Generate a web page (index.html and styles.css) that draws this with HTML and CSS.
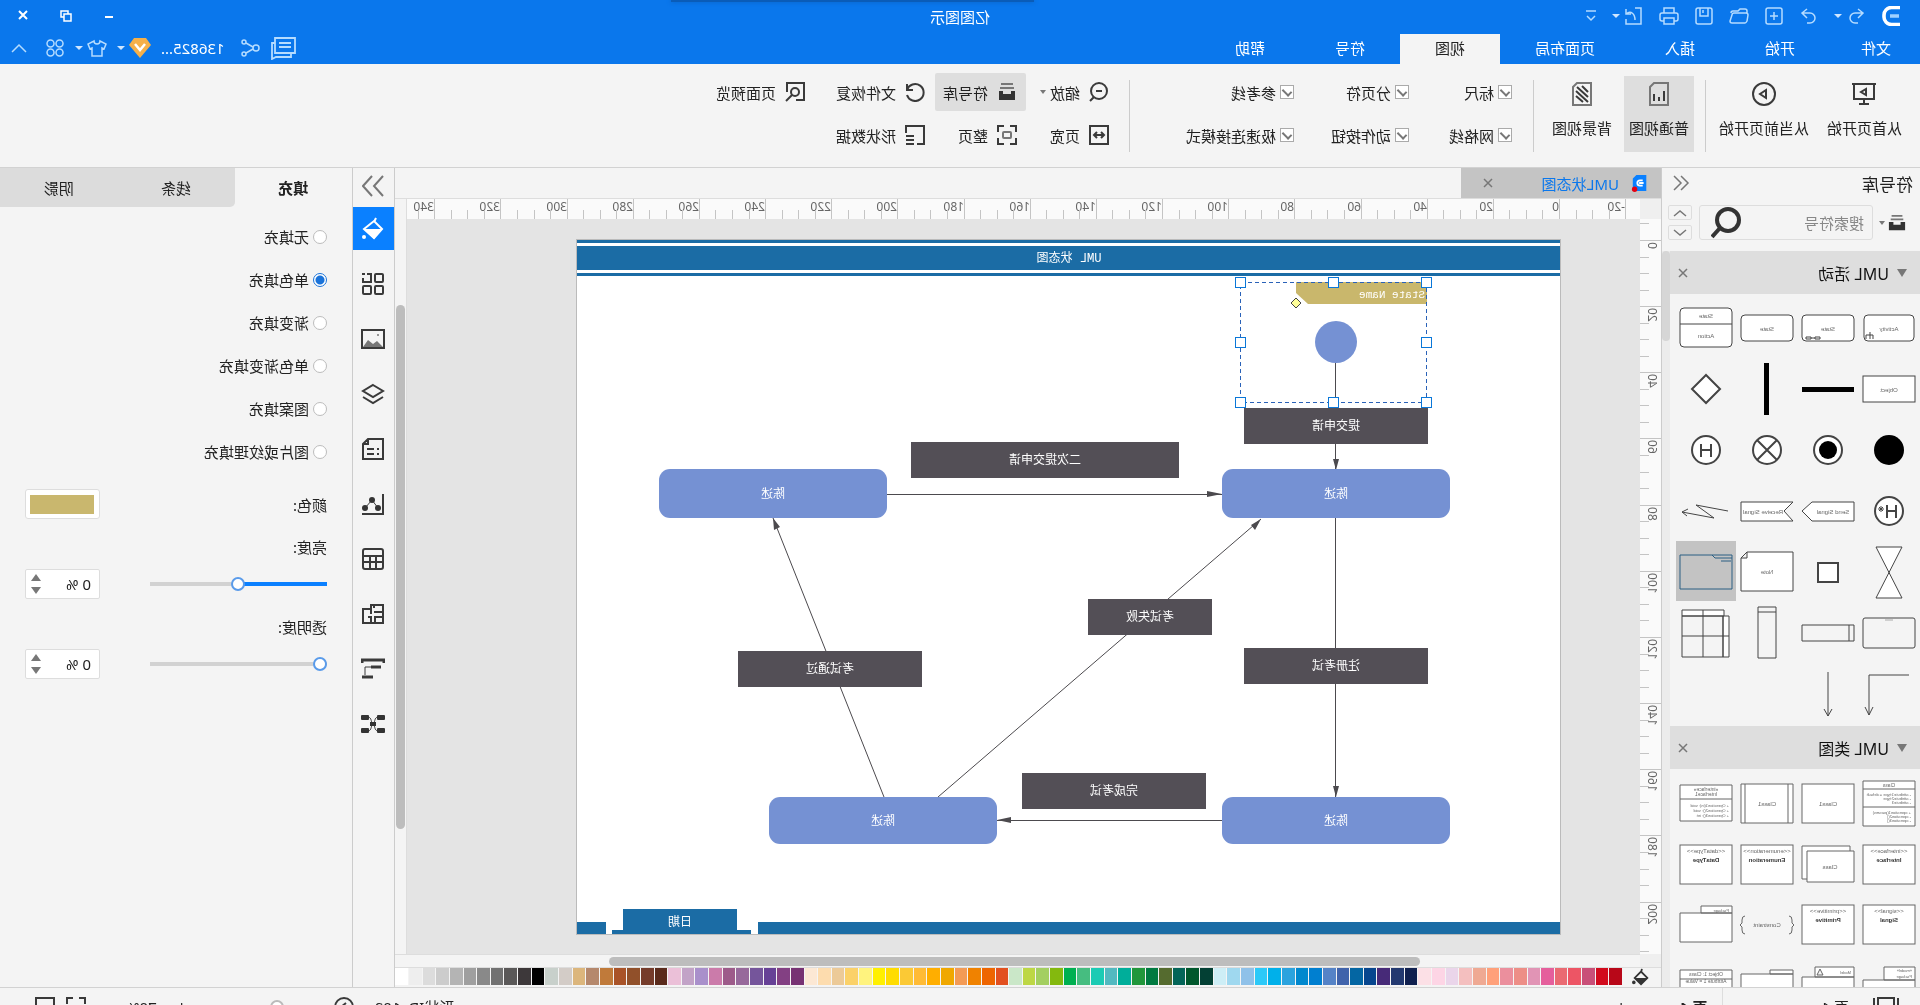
FILE: index.html
```html
<!DOCTYPE html>
<html lang="zh-CN">
<head>
<meta charset="utf-8">
<title>亿图图示</title>
<link rel="stylesheet" href="styles.css">
</head>
<body>
<div class="app">
  <header class="titlebar">
    <div class="quick">
      <svg class="i20" viewBox="0 0 20 20"><path d="M17 1.500H8.500A7.500 7.500 0 0 0 1 9.500v1A7.500 7.500 0 0 0 8.500 18.500H17" transform="translate(18 0) scale(-1 1)" fill="none" stroke="#fff" stroke-width="3.600"/><path d="M2 10h9" stroke="#9fd0ff" stroke-width="3.500"/></svg>
      <span class="pair"><button><svg class="i20 ln" viewBox="0 0 20 20"><path d="M8 3 3 7l5 5M3 7h8a5 5 0 0 1 0 10H8"/></svg></button><i class="caret"></i></span>
      <button><svg class="i20 ln" viewBox="0 0 20 20"><path d="m12 3 5 4-5 5M17 7H9a5 5 0 0 0 0 10h3"/></svg></button>
      <button><svg class="i20 ln" viewBox="0 0 20 20"><rect x="2" y="2" width="16" height="16" rx="2"/><path d="M10 6v8M6 10h8"/></svg></button>
      <button><svg class="i20 ln" viewBox="0 0 20 20"><path d="M2 7V5q0-2 2-2h5l2 2h5q2 0 2 2M1 9q0-2 2-2h12q2 0 2 2l2 6q0 2-2 2H4q-1 0-2-2z"/></svg></button>
      <button><svg class="i20 ln" viewBox="0 0 20 20"><rect x="2" y="2" width="16" height="16" rx="2"/><path d="M6 2v8h8V2M11 4v3"/></svg></button>
      <button><svg class="i20 ln" viewBox="0 0 20 20"><path d="M5 7V2h10v5M5 15H3q-2 0-2-2V9q0-2 2-2h14q2 0 2 2v4q0 2-2 2h-2M5 12h10v6H5z"/></svg></button>
      <span class="pair"><button><svg class="i20 ln" viewBox="0 0 20 20"><path d="M9 2H3v16h15v-5M18 3v5h-5M18 8c-5-4-9 0-9 6"/></svg></button><i class="caret"></i></span>
      <button><svg class="i12 ln" viewBox="0 0 12 12"><path d="M1 1h10M2 6l4 4 4-4"/></svg></button>
    </div>
    <h1>亿图图示</h1>
    <div class="win">
      <button><svg class="i20 wh" viewBox="0 0 20 20"><path d="M6 11h8"/></svg></button>
      <button><svg class="i20 wh thin" viewBox="0 0 20 20"><path d="M5 8h7v7H5zM8 8V5h7v6h-3"/></svg></button>
      <button><svg class="i20 wh" viewBox="0 0 20 20"><path d="m6 5 8 8M14 5l-8 8"/></svg></button>
    </div>
    <div class="drop-shadow"></div>
  </header>

  <div class="menubar">
    <nav>
      <a href="#" class="first">文件</a><a href="#">开始</a><a href="#">插入</a><a href="#">页面布局</a><a href="#" class="on">视图</a><a href="#">符号</a><a href="#">帮助</a>
    </nav>
    <div class="account">
      <button><svg class="i26 ln" viewBox="0 0 26 24"><path d="M1 2h20v15H1zM5 7h12M5 11h12M5 17v4h15l4 2V7h-3" stroke-width="1.800"/></svg></button>
      <button><svg class="i20 ln" viewBox="0 0 20 20"><circle cx="4" cy="10" r="3"/><circle cx="16" cy="4" r="2"/><circle cx="16" cy="16" r="2"/><path d="m7 9 7-4M7 11l7 4"/></svg></button>
      <span class="user">136825...</span>
      <span class="pair"><svg class="i22" viewBox="0 0 22 20"><path d="M5 0h12l5 7-11 13L0 7z" fill="#f5b04a"/><path d="m6 6 5 6 5-6" fill="none" stroke="#fff" stroke-width="2.500"/></svg><i class="caret"></i></span>
      <span class="pair"><button><svg class="i20 ln" viewBox="0 0 20 20"><path d="M7 3 1 6l2 5 2-1v8h10v-8l2 1 2-5-6-3a3 3 0 0 1-6 0z"/></svg></button><i class="caret"></i></span>
      <button><svg class="i20 ln" viewBox="0 0 20 20"><circle cx="5.500" cy="5.500" r="3.500"/><circle cx="14.500" cy="5.500" r="3.500"/><circle cx="5.500" cy="14.500" r="3.500"/><circle cx="14.500" cy="14.500" r="3.500"/></svg></button>
      <button class="fold"><svg class="i16 ln" viewBox="0 0 16 16"><path d="m1 12 7-7 7 7"/></svg></button>
    </div>
  </div>

  <div class="ribbon">
    <button class="big"><svg class="i24 dk" viewBox="0 0 24 24"><path d="M0 2h24M2 2v15h20V2M12 17v5M7 22h10M10 7v6l5-3z"/></svg>从首页开始</button>
    <button class="big"><svg class="i24 dk" viewBox="0 0 24 24"><circle cx="12" cy="12" r="11"/><path d="M10 8v8l6-4z"/></svg>从当前页开始</button>
    <span class="sep"></span>
    <button class="big on"><svg class="i24 dk" viewBox="0 0 24 24"><path d="M3 1h14l4 4v18H3z" stroke="#777"/><path d="M7 12v7M12 15v4M17 9v10" transform="translate(24 0) scale(-1 1)"/></svg>普通视图</button>
    <button class="big last"><svg class="i24 dk" viewBox="0 0 24 24"><path d="M3 1h14l4 4v18H3z" stroke="#777"/><path d="M6 10l6-6M6 15 17 5M6 20 18 9M11 20l7-6"/></svg>背景视图</button>
    <span class="sep"></span>
    <div class="checks">
      <label><input type="checkbox" checked>标尺</label><label><input type="checkbox" checked>分页符</label><label><input type="checkbox" checked>参考线</label>
      <label><input type="checkbox" checked>网格线</label><label><input type="checkbox" checked>动作按钮</label><label><input type="checkbox" checked>极速连接模式</label>
    </div>
    <span class="sep"></span>
    <div class="tools">
      <button><svg class="i20 dk" viewBox="0 0 20 20"><circle cx="10" cy="9" r="8"/><path d="m15 15 4 4M7 9h6"/></svg>缩放<i class="caret grey"></i></button>
      <button class="on"><svg class="i20" viewBox="0 0 20 20"><path d="M4 2h12M3 6h14" stroke="#777" stroke-width="2"/><path d="M2 9h4v3h8V9h4v9H2z" fill="#333"/></svg>符号库</button>
      <button><svg class="i20 dk" viewBox="0 0 20 20"><path d="M18 2v6h-6M18 8a8.500 8.500 0 1 0 0 5"/></svg>文件恢复</button>
      <button><svg class="i20 dk" viewBox="0 0 20 20"><path d="M9 18H1V1h17v9"/><circle cx="10" cy="10" r="4"/><path d="m13 13 6 6"/></svg>页面预览</button>
      <button><svg class="i20 dk" viewBox="0 0 20 20"><path d="M1 1h18v18H1zM5 10h10M8 7l-3 3 3 3M12 7l3 3-3 3"/></svg>页宽</button>
      <button><svg class="i20 dk" viewBox="0 0 20 20"><path d="M1 7V1h6M13 1h6v6M19 13v6h-6M7 19H1v-6"/><rect x="6" y="7" width="8" height="6" rx="1" stroke="#777"/></svg>整页</button>
      <button><svg class="i20 dk" viewBox="0 0 20 20"><path d="M8 19H1V1h18v7M11 11h8M11 15h8M11 19h8"/></svg>形状数据</button>
    </div>
  </div>

  <main class="work">
    <aside class="library">
      <div class="lib-head"><h2>符号库</h2><button><svg class="i18 gy" viewBox="0 0 18 18"><path d="m9 2-7 7 7 7M16 2 9 9l7 7"/></svg></button></div>
      <div class="lib-search">
        <button class="lib-menu"><svg class="i18" viewBox="0 0 20 20"><path d="M4 2h12M3 6h14" stroke="#777" stroke-width="2"/><path d="M1 9h5v3h8V9h5v9H1z" fill="#333"/></svg><i class="caret grey"></i></button>
        <div class="field"><input type="text" placeholder="搜索符号" aria-label="搜索符号"><svg class="i30" viewBox="0 0 30 32"><circle cx="13" cy="13" r="11"/><path d="m21 21 8 9"/></svg></div>
        <div class="updown"><button><svg class="i14 gy" viewBox="0 0 14 8"><path d="m1 7 6-5 6 5"/></svg></button><button><svg class="i14 gy" viewBox="0 0 14 8"><path d="m1 1 6 5 6-5"/></svg></button></div>
      </div>
      <div class="lib-body">
        <div class="lists">
          <div class="group"><i class="tri"></i><h3>UML 活动</h3><button><svg class="i10 gy" viewBox="0 0 10 10"><path d="m1 1 8 8M9 1 1 9"/></svg></button></div>
          <div class="shapes">
            <svg viewBox="0 0 60 60"><rect x="5" y="18" width="50" height="26" rx="4"/><text x="30" y="34">Activity</text><path d="M46 42v-4h7v4M49 35v7"/></svg>
            <svg viewBox="0 0 60 60"><rect x="4" y="18" width="52" height="26" rx="4"/><text x="30" y="34">State</text><path class="n" d="M38 40h5v2h-5zM47 40h5v2h-5zM43 41h4"/></svg>
            <svg viewBox="0 0 60 60"><rect x="4" y="18" width="52" height="26" rx="4"/><text x="30" y="34">State</text></svg>
            <svg viewBox="0 0 60 60"><rect x="4" y="11" width="52" height="39" rx="4"/><path d="M4 27h52"/><text x="30" y="21">State</text><text x="30" y="41">Action</text></svg>

            <svg viewBox="0 0 60 60"><rect x="4" y="18" width="52" height="26"/><text x="30" y="34">Object</text></svg>
            <svg viewBox="0 0 60 60"><rect class="f" x="4" y="29" width="52" height="5"/></svg>
            <svg viewBox="0 0 60 60"><rect class="f" x="28" y="5" width="5" height="52"/></svg>
            <svg viewBox="0 0 60 60"><path class="b" d="M30 17 44 31 30 45 16 31z"/></svg>

            <svg viewBox="0 0 60 60"><circle class="f" cx="30" cy="31" r="15"/></svg>
            <svg viewBox="0 0 60 60"><circle class="b" cx="30" cy="31" r="14"/><circle class="f" cx="30" cy="31" r="9"/></svg>
            <svg viewBox="0 0 60 60"><circle class="b" cx="30" cy="31" r="14"/><path class="b" d="m20 21 20 20M40 21 20 41"/></svg>
            <svg viewBox="0 0 60 60"><circle class="b" cx="30" cy="31" r="14"/><path class="b" d="M25 25v13M35 25v13M25 31h10"/></svg>

            <svg viewBox="0 0 60 60"><circle class="b" cx="30" cy="31" r="14"/><path class="b" d="M23 25v13M32 25v13M23 31h9"/><path d="M38 26v6M35 29h6M36 27l4 4M40 27l-4 4"/></svg>
            <svg viewBox="0 0 60 60"><path d="M4 22h42l10 9-10 10H4z"/><text x="25" y="34">Send Signal</text></svg>
            <svg viewBox="0 0 60 60"><path d="M4 22h52v19H4l9-10z"/><text x="34" y="34">Receive Signal</text></svg>
            <svg viewBox="0 0 60 60"><path class="n" d="m8 31 32-6-18 13 32-6M48 29l6 3-5 4"/></svg>

            <svg viewBox="0 0 60 60"><path d="M17 6h26L17 57h26z"/></svg>
            <svg viewBox="0 0 60 60"><rect x="20" y="22" width="20" height="19" stroke-width="2"/></svg>
            <svg viewBox="0 0 60 60"><path d="M4 11h46l6 6v33H4zM50 11v6h6"/><text x="30" y="33">Note</text></svg>
            <svg class="sel" viewBox="0 0 60 60"><path class="n" d="M4 14h52v34H4zM4 17h17l3-3"/><path d="M5 20h10" /></svg>

            <svg viewBox="0 0 60 60"><rect class="n" x="4" y="16" width="52" height="30" rx="2"/><path d="M26 18h8" stroke="#aaa"/></svg>
            <svg viewBox="0 0 60 60"><path class="n" d="M4 23h52v16H4zM9 23v16"/></svg>
            <svg viewBox="0 0 60 60"><path class="n" d="M21 5h18v51H21zM21 10h18"/></svg>
            <svg viewBox="0 0 60 60"><path d="M12 8h42v6H12zM7 14h6v41H7z"/><path class="n" d="M13 14h41v41H13zM33 8v47M7 34h47"/></svg>

            <svg viewBox="0 0 60 60"><path class="n" d="M10 12h40v40M46 44l4 8 4-8"/></svg>
            <svg viewBox="0 0 60 60"><path class="n" d="M30 9v44M26 46l4 7 4-7"/></svg>
          </div>
          <div class="group"><i class="tri"></i><h3>UML 类图</h3><button><svg class="i10 gy" viewBox="0 0 10 10"><path d="m1 1 8 8M9 1 1 9"/></svg></button></div>
          <div class="shapes cls">
            <svg viewBox="0 0 60 60"><path d="M4 9h52v45H4zM4 17h52M4 35h52"/><text class="s" x="30" y="15">Class</text><text class="l" x="8" y="24">- attribute1:type = default</text><text class="l" x="8" y="28">- attribute2:type</text><text class="l" x="8" y="32">- attribute3</text><text class="l" x="8" y="42">+ operation1(params)</text><text class="l" x="8" y="46">- operation2()</text><text class="l" x="8" y="50">- operation3()</text></svg>
            <svg viewBox="0 0 60 60"><rect x="4" y="12" width="52" height="39"/><text x="30" y="34">Class1</text></svg>
            <svg viewBox="0 0 60 60"><path d="M4 12h52v39H4zM9 12v39M52 12v39"/><text x="30" y="34">Class1</text></svg>
            <svg viewBox="0 0 60 60"><path d="M4 13h52v36H4zM4 27h52"/><text class="s" x="30" y="19">«interface»</text><text class="s" x="30" y="24">Interface1</text><text class="l" x="7" y="35">+ Operation1(in): void</text><text class="l" x="7" y="40">+ Operation2(): void</text><text class="l" x="7" y="45">+ Operation3(): int</text></svg>

            <svg viewBox="0 0 60 60"><rect x="4" y="12" width="52" height="39"/><text x="30" y="20">&lt;&lt;interface&gt;&gt;</text><text class="bd" x="30" y="29">Interface</text></svg>
            <svg viewBox="0 0 60 60"><path d="M8 13h48v33H8z"/><path d="M4 18h47v31H4z"/><text x="28" y="36">Class</text></svg>
            <svg viewBox="0 0 60 60"><rect x="4" y="12" width="52" height="39"/><text x="30" y="20">&lt;&lt;enumeration&gt;&gt;</text><text class="bd" x="30" y="29">Enumeration</text></svg>
            <svg viewBox="0 0 60 60"><rect x="4" y="12" width="52" height="39"/><text x="30" y="20">&lt;&lt;dataType&gt;&gt;</text><text class="bd" x="30" y="29">DataType</text></svg>

            <svg viewBox="0 0 60 60"><rect x="4" y="11" width="52" height="39"/><text x="30" y="19">&lt;&lt;signal&gt;&gt;</text><text class="bd" x="30" y="28">Signal</text></svg>
            <svg viewBox="0 0 60 60"><rect x="4" y="11" width="52" height="39"/><text x="30" y="19">&lt;&lt;primitive&gt;&gt;</text><text class="bd" x="30" y="28">Primitive</text></svg>
            <svg viewBox="0 0 60 60"><path class="n" d="M8 22q-3 0-3 4v3l-2 2 2 2v3q0 4 3 4M52 22q3 0 3 4v3l2 2-2 2v3q0 4-3 4"/><text x="30" y="33">Constraint</text></svg>
            <svg viewBox="0 0 60 60"><path d="M4 12h31v7H4zM4 19h52v29H4z"/><text class="l" x="7" y="18">Package</text></svg>

            <svg viewBox="0 0 60 60"><path d="M4 12h31v13H4zM4 25h52v30H4z"/><text class="l" x="7" y="17">«model»</text><text class="l" x="7" y="23">Package</text></svg>
            <svg viewBox="0 0 60 60"><path d="M4 12h39v10H4zM4 22h52v30H4zM35 20h6l-3-6z"/><text class="l" x="7" y="19">Model</text></svg>
            <svg viewBox="0 0 60 60"><path d="M4 15h23v4H4zM4 19h52v30H4z"/></svg>
            <svg viewBox="0 0 60 60"><path d="M4 15h52v40H4zM4 24h52"/><text class="s" x="30" y="21">Object 1: Class</text><text class="s" x="30" y="28">Attribute 1 = Value</text></svg>
          </div>
        </div>
        <div class="lib-scroll"><i></i></div>
      </div>
    </aside>

    <section class="center">
      <div class="doctabs">
        <div class="doctab"><svg class="i18" viewBox="0 0 18 20"><path d="M2 1h11l4 4v14H2z" fill="#0a80ff"/><path d="M6 7h3a3 3 0 0 1 0 6H6M5 10h5" fill="none" stroke="#fff" stroke-width="2"/><circle cx="15" cy="17" r="3" fill="#e60012"/></svg><span>UML状态图</span><button><svg class="i10 gy" viewBox="0 0 10 10"><path d="m1 1 8 8M9 1 1 9"/></svg></button></div>
      </div>
      <div class="board">
        <div class="corner"></div>
        <svg class="rule-h" id="rule-h"></svg>
        <div class="vscroll"><i></i></div>
        <svg class="rule-v" id="rule-v"></svg>
        <div class="canvas">
          <svg class="sheet" viewBox="0 0 983 694">
            <g fill="#1b6ca5">
              <path d="M0 0h983v3H0zM0 6h983v24H0zM0 33h983v3H0z"/>
              <path d="M0 682h802v12H0zM809 690h139v4H809zM823 669h114v25H823zM954 682h29v12h-29z"/>
            </g>
            <text x="491" y="22">UML 状态图</text>
            <text x="880" y="686">日期</text>
            <g class="wire">
              <path class="crisp" d="M224 123v106M224 278v279M673 254H338M338 580h225"/>
              <path d="M622 557 299 279M676 557 787 278"/>
            </g>
            <g fill="#4c4a4e">
              <path d="m224 230-3-11h6zM224 557l-3-11h6zM338 254l15-3v6zM563 580l-14-3v6zM299 279l10 6-4 5zM787 278l-7 9 6 3z"/>
            </g>
            <circle cx="224" cy="102" r="21" fill="#7591d3"/>
            <g fill="#534f56">
              <path d="M132 168h184v36H132zM381 202h268v36H381zM348 359h124v36H348zM132 408h184v36H132zM638 411h184v36H638zM354 533h184v36H354z"/>
            </g>
            <g fill="#7591d3">
              <rect x="110" y="229" width="228" height="49" rx="11"/><rect x="673" y="229" width="228" height="49" rx="11"/>
              <rect x="110" y="557" width="228" height="47" rx="11"/><rect x="563" y="557" width="228" height="47" rx="11"/>
            </g>
            <text x="224" y="190">提交申请</text><text x="515" y="224">二次提交申请</text><text x="410" y="381">考试失败</text><text x="224" y="430">注册考试</text><text x="730" y="433">考试通过</text><text x="446" y="555">完成考试</text>
            <text x="224" y="258">陈述</text><text x="787" y="258">陈述</text><text x="224" y="585">陈述</text><text x="677" y="585">陈述</text>
            <path d="M133 42h131v11l-12 11H133z" fill="#c9b76c"/>
            <text class="mono" x="135" y="58">State Name</text>
            <rect class="pick" x="133" y="42" width="186" height="120"/>
            <g class="grips">
              <rect x="128" y="37" width="10" height="10"/><rect x="221" y="37" width="10" height="10"/><rect x="314" y="37" width="10" height="10"/>
              <rect x="128" y="97" width="10" height="10"/><rect x="314" y="97" width="10" height="10"/>
              <rect x="128" y="157" width="10" height="10"/><rect x="221" y="157" width="10" height="10"/><rect x="314" y="157" width="10" height="10"/>
            </g>
            <path d="m264 58 5 5-5 5-5-5z" fill="#ffff99" stroke="#444"/>
          </svg>
        </div>
        <div class="corner"></div>
        <div class="hscroll"><i></i></div>
      </div>
      <div class="palette"><button><svg class="i18" viewBox="0 0 20 20"><path d="m9 1 1 4M3 11l7-7 7 7-7 7z" fill="none" stroke="#333" stroke-width="2"/><path d="M3 11h14l-7 7z" fill="#333"/><circle cx="18" cy="16" r="2" fill="#333"/></svg></button><div id="swatches"></div></div>
    </section>

    <div class="strip">
      <button class="out"><svg class="i22 gy" viewBox="0 0 22 22"><path d="m1 1 9 10-9 10M12 1l9 10-9 10" stroke-width="2"/></svg></button>
      <button class="on"><svg class="i24" viewBox="0 0 24 24"><path d="m9 1 2 4M3 12l8-8 10 8-10 9z" fill="none" stroke="#fff" stroke-width="2"/><path d="M3 12h18l-10 10z" fill="#fff"/><circle cx="21" cy="20" r="2" fill="#fff"/></svg></button>
      <button><svg class="i24 dk" viewBox="0 0 24 24"><rect x="2" y="2" width="8" height="8" rx="1"/><path d="M18 2h-4v8h8V6M20 2h3"/><rect x="2" y="14" width="8" height="8" rx="1"/><rect x="14" y="14" width="8" height="8" rx="1"/></svg></button>
      <button><svg class="i24 dk" viewBox="0 0 24 24"><rect x="1" y="3" width="22" height="18"/><path d="m2 20 6-6 4 3 5-4 5 7z" fill="#777" stroke="none"/><circle cx="7" cy="8" r="1" fill="#777" stroke="none"/></svg></button>
      <button><svg class="i24 dk" viewBox="0 0 24 24"><path d="M12 3 2 9l10 6 10-6zM2 15l10 6 10-6"/></svg></button>
      <button><svg class="i24 dk" viewBox="0 0 24 24"><path d="M2 2h15l5 5v15H2zM17 2v5h5M6 12h2M11 12h7M6 17h2M11 17h7"/></svg></button>
      <button><svg class="i24 dk" viewBox="0 0 24 24"><path d="M2 2v20h21"/><path d="m7 16 6-8 7 8" stroke-width="1"/><g fill="#333" stroke="none"><circle cx="7" cy="16" r="3"/><circle cx="13" cy="8" r="3"/><circle cx="20" cy="16" r="3"/></g></svg></button>
      <button><svg class="i24 dk" viewBox="0 0 24 24"><rect x="2" y="2" width="20" height="20" rx="2"/><path d="M2 9h20M2 15h20M9 9v13M15 9v13"/></svg></button>
      <button><svg class="i24 dk" viewBox="0 0 24 24"><path d="M2 3h12v4h8v14H2zM2 10h9M11 3v3M14 7v5M2 15h8v6M14 21v-6h3"/></svg></button>
      <button><svg class="i24 dk" viewBox="0 0 24 24"><path d="M1 6V3h22v3" stroke-width="3"/><path d="M4 10h10M12 20h11" stroke-width="3"/><path d="M14 10h6v8" stroke-width="1"/></svg></button>
      <button><svg class="i24 dk" viewBox="0 0 24 24"><path d="M7 5c4 0 3 7 5 7s1-7 5-7M7 19c4 0 3-7 5-7s1 7 5 7" stroke-width="1"/><g fill="#333" stroke="none"><rect x="0" y="3" width="8" height="5" rx="1"/><rect x="16" y="3" width="8" height="5" rx="1"/><rect x="0" y="16" width="8" height="5" rx="1"/><rect x="16" y="16" width="8" height="5" rx="1"/><rect x="9" y="10" width="6" height="4"/></g></svg></button>
    </div>

    <aside class="props">
      <div class="ptabs"><button class="on">填充</button><button class="a">线条</button><button>阴影</button></div>
      <form class="fill">
        <label class="r"><input type="radio" name="fill">无填充</label>
        <label class="r"><input type="radio" name="fill" checked>单色填充</label>
        <label class="r"><input type="radio" name="fill">渐变填充</label>
        <label class="r"><input type="radio" name="fill">单色渐变填充</label>
        <label class="r"><input type="radio" name="fill">图案填充</label>
        <label class="r"><input type="radio" name="fill">图片或纹理填充</label>
        <div class="row color"><label for="color">颜色:</label><button type="button" id="color" class="chip"><i></i></button></div>
        <label class="cap" for="bright">亮度:</label>
        <div class="row"><input type="range" id="bright" class="half" min="-100" max="100" value="0"><span class="spin"><input type="text" value="0 %" aria-label="亮度"><span class="arrows"><button type="button" class="up"></button><button type="button" class="down"></button></span></span></div>
        <label class="cap" for="alpha">透明度:</label>
        <div class="row"><input type="range" id="alpha" min="0" max="100" value="0"><span class="spin"><input type="text" value="0 %" aria-label="透明度"><span class="arrows"><button type="button" class="up"></button><button type="button" class="down"></button></span></span></div>
      </form>
    </aside>
  </main>

  <footer class="status">
    <div class="pages">
      <button><svg class="i26 dk" viewBox="0 0 26 24"><rect x="5" y="3" width="16" height="20"/><path d="M1 3v20M25 3v20"/></svg></button>
      <span class="page">页-1</span><i class="caret grey"></i><span class="bar"></span><b>页-1</b><button class="plus">+</button>
    </div>
    <div class="info">
      <span>形状ID: 102</span>
      <button><svg class="i20 dk" viewBox="0 0 20 20"><circle cx="10" cy="10" r="9"/><path d="m8 6 5 4-5 4"/></svg></button>
      <input type="range" id="zoom" min="0" max="100" value="35" aria-label="70%">
      <button class="plus">+</button><span class="pct">70%</span>
      <button><svg class="i20 dk" viewBox="0 0 20 20"><path d="M1 7V1h6M13 1h6v6"/></svg></button>
      <button><svg class="i20 dk" viewBox="0 0 20 20"><path d="M1 1h18v18H1z"/></svg></button>
    </div>
  </footer>
</div>
<script src="app.js"></script>
</body>
</html>
```
FILE: styles.css
```css
* { box-sizing: border-box; }
body { margin: 0; height: 100vh; overflow: hidden; background: #f4f4f4; }
body, button, input { font-family: "Noto Sans", "Noto Sans CJK SC", sans-serif; font-size: 15px; color: #222; }
button { border: 0; background: none; padding: 0; margin: 0; display: flex; align-items: center; justify-content: center; cursor: default; }
h1, h2, h3 { margin: 0; font-weight: 400; }
svg { display: block; flex: none; }

/* The whole interface runs right to left as a mirror image. */
.app { transform: scaleX(-1); height: calc(100vh + 20px); display: flex; flex-direction: column; }

.i10 { width: 10px; height: 10px; }
.i12 { width: 12px; height: 12px; }
.i14 { width: 14px; height: 8px; }
.i16 { width: 16px; height: 16px; }
.i18 { width: 18px; height: 18px; }
.i20 { width: 20px; height: 20px; }
.i22 { width: 22px; height: 22px; }
.i24 { width: 24px; height: 24px; }
.i26 { width: 26px; height: 24px; }
.i30 { width: 30px; height: 32px; fill: none; stroke: #333; stroke-width: 4; }
.ln { fill: none; stroke: #b5dcff; stroke-width: 1.5; }
.wh { fill: none; stroke: #fff; stroke-width: 2; }
.thin { stroke-width: 1.5; }
.dk { fill: none; stroke: #3a3a3a; stroke-width: 2; }
.gy { fill: none; stroke: #777; stroke-width: 1.5; }
.caret { width: 8px; border: 4px solid transparent; border-top-color: #cfe6ff; border-bottom: 0; }
.caret.grey { width: 6px; border-width: 3px; border-top: 4px solid #777; border-bottom: 0; }
.pair { display: flex; align-items: center; gap: 4px; }

.titlebar { position: relative; flex: none; height: 34px; background: #0a77ec; display: grid; grid-template-columns: 1fr auto 1fr; align-items: center; padding-bottom: 2px; }
.titlebar h1 { font-size: 15px; color: #fff; }
.quick { display: flex; align-items: center; gap: 15px; padding-left: 19px; }
.win { display: flex; justify-content: flex-end; gap: 23px; padding-right: 13px; }
.drop-shadow { position: absolute; top: 0; left: 886px; width: 363px; height: 2px; background: #0a5cb8; box-shadow: 0 0 4px #0a5cb8; }

.menubar { flex: none; height: 30px; background: #0a77ec; display: flex; justify-content: space-between; }
nav { display: flex; }
nav a { padding: 0 35px 2px; line-height: 28px; color: #fff; text-decoration: none; }
nav .first { padding: 0 31px 0 29px; }
nav .on { background: #f4f4f4; color: #222; }
.account { display: flex; align-items: center; gap: 10px; padding: 0 11px 2px 0; color: #fff; }
.user { padding-left: 5px; }
.fold { padding-left: 8px; }

.ribbon { flex: none; height: 104px; border-bottom: 1px solid #d2d2d2; background: #f4f4f4; display: flex; padding: 12px 0 15px 13px; }
.big { flex-direction: column; justify-content: flex-start; gap: 11px; padding: 6px 5px; line-height: 22px; margin-right: 8px; }
.big.on { background: #dedede; margin-right: 7px; }
.big.last { margin-right: 13px; }
.sep { width: 1px; background: #ccc; margin: 4px 11px 0; }
.big + .sep { margin-left: 0; }
.checks { display: grid; grid-template-columns: 103px 115px 153px; grid-template-rows: 32px 32px; row-gap: 11px; padding-left: 10px; }
.checks label { display: flex; align-items: center; gap: 4px; white-space: nowrap; }
input[type=checkbox] { appearance: none; margin: 0; width: 14px; height: 14px; border: 1px solid #aaa; background: #fff; display: grid; place-items: center; }
input[type=checkbox]::after { content: ""; width: 4px; height: 7px; border: solid #777; border-width: 0 2px 2px 0; transform: rotate(45deg); margin-bottom: 2px; }
.tools { display: grid; grid-template-columns: 85px 91px 116px auto; grid-template-rows: 38px 38px; row-gap: 5px; padding-left: 3px; margin-top: -3px; column-gap: 4px; }
.tools button { justify-content: flex-start; gap: 9px; padding-left: 6px; }
.tools .caret { margin-left: -5px; }
.tools .on { background: #dedede; border-radius: 2px; }
.tools button:nth-child(2), .tools button:nth-child(6) { padding-left: 9px; }

.work { flex: 1; min-height: 0; display: flex; }

.library { flex: none; width: 259px; border-right: 1px solid #ccc; display: flex; flex-direction: column; }
.lib-head { display: flex; justify-content: space-between; align-items: center; height: 32px; padding: 0 10px 2px 7px; }
.lib-head h2 { font-size: 17px; }
.lib-search { display: flex; height: 51px; padding: 5px 6px 11px 15px; gap: 7px; }
.lib-menu { gap: 3px; width: 25px; }
.field { flex: 1; min-width: 0; display: flex; align-items: center; border: 1px solid #ddd; border-radius: 3px; padding: 0 11px 0 8px; }
.field input { flex: 1; width: 100%; min-width: 0; border: 0; background: none; padding: 0; }
.field input::placeholder { color: #888; }
.updown { flex: none; width: 24px; display: flex; flex-direction: column; justify-content: space-between; }
.updown button { height: 15px; border: 1px solid #ddd; border-radius: 2px; }
.lib-body { flex: 1; min-height: 0; display: flex; }
.lists { flex: 1; overflow: hidden; }
.lib-scroll { width: 8px; background: #ececec; }
.lib-scroll i { display: block; height: 90px; background: #d6d6d6; border-radius: 4px; }
.group { height: 43px; background: #dedede; display: flex; align-items: center; padding: 0 8px 0 13px; }
.group h3 { flex: 1; font-size: 16px; color: #111; padding-left: 8px; }
.tri { border: 5px solid transparent; border-top: 8px solid #777; border-bottom: 0; }
.shapes { display: grid; grid-template-columns: repeat(4, 60px); gap: 1px; padding: 3px 1px; }
.shapes svg { width: 60px; height: 60px; fill: #fff; stroke: #444; stroke-width: 1; }
.shapes text { font: 6px "Liberation Sans", sans-serif; fill: #666; stroke: none; text-anchor: middle; }
.shapes .s { font-size: 5px; }
.shapes .l { font-size: 4px; text-anchor: start; }
.shapes .bd { font-weight: 700; fill: #333; }
.shapes .f { fill: #000; stroke: none; }
.shapes .n { fill: none; }
.shapes .b { stroke-width: 2; }
.shapes .sel { background: #c3c3c3; stroke: #2a5f83; }
.cls svg { stroke: #666; }

.center { flex: 1; min-width: 0; display: flex; flex-direction: column; }
.doctabs { flex: none; height: 31px; border-bottom: 1px solid #ddd; display: flex; }
.doctab { width: 200px; background: #c4c4c4; display: flex; align-items: center; color: #0a77ec; padding: 0 22px 0 12px; }
.doctab span { flex: 1; padding-left: 12px; }
.board { flex: 1; min-height: 0; display: grid; grid-template-columns: 21px 1fr 12px; grid-template-rows: 20px 1fr 13px; }
.corner { background: #efefef; }
.rule-h, .rule-v { width: 100%; height: 100%; min-width: 0; min-height: 0; background: #fafafa; overflow: hidden; }
.rule-h line, .rule-v line { stroke: #c4c4c4; shape-rendering: crispEdges; }
.rule-h text, .rule-v text { font: 12px "Noto Sans", sans-serif; fill: #666; }
.rule-v text { text-anchor: end; }
.vscroll { grid-column: 3; grid-row: 1 / 3; padding: 106px 1px 0; border-left: 1px solid #ddd; }
.vscroll i { display: block; height: 524px; background: #bdbdbd; border-radius: 5px; }
.canvas { grid-column: 2; grid-row: 2; min-width: 0; min-height: 0; overflow: hidden; background: #e4e4e4; padding: 21px 0 0 80px; }
.hscroll { padding: 2px 0; grid-column: 2 / 4; border-top: 1px solid #ddd; }
.hscroll i { display: block; width: 811px; height: 9px; margin-left: 220px; background: #bdbdbd; border-radius: 5px; }
.sheet { width: 983px; height: 694px; background: #fff; outline: 1px solid #bbb; }
.sheet text { font: 12px "Noto Sans Mono", "Liberation Mono", "Noto Sans CJK SC", monospace; fill: #fff; text-anchor: middle; }
.sheet .mono { font: 11px "Liberation Mono", monospace; text-anchor: start; }
.wire { fill: none; stroke: #4c4a4e; stroke-width: 1; }
.crisp { shape-rendering: crispEdges; }
.pick { fill: none; stroke: #2a62b8; stroke-dasharray: 4 3; shape-rendering: crispEdges; }
.grips { fill: #fff; stroke: #0a77d8; shape-rendering: crispEdges; }
.palette { flex: none; height: 20px; border-top: 1px solid #ddd; display: flex; padding: 0 0 2px; }
.palette button { width: 39px; }
#swatches { flex: 1; display: flex; gap: 1px; }
#swatches i { flex: 1; }

.strip { flex: none; width: 43px; border: solid #ccc; border-width: 0 1px; display: flex; flex-direction: column; gap: 12px; }
.strip button { flex: none; height: 43px; }
.strip .out { height: 39px; margin-bottom: -12px; padding-bottom: 4px; }
.strip .on { background: #0a80ff; }

.props { flex: none; width: 352px; }
.ptabs { display: flex; height: 39px; }
.ptabs button { flex: 1; background: #dcdcdc; }
.ptabs .on { background: none; font-weight: 700; }
.ptabs .a { border-bottom-left-radius: 5px; }
.fill { padding: 8px 25px 0; display: flex; flex-direction: column; }
.r { height: 43px; display: flex; align-items: center; gap: 4px; }
input[type=radio] { appearance: none; margin: 0; width: 14px; height: 14px; border: 1px solid #bbb; border-radius: 50%; background: #fff; }
input[type=radio]:checked { border-color: #1a73d9; background: radial-gradient(#1a73d9 0 4px, #fff 5px); }
.row { display: flex; justify-content: space-between; align-items: center; height: 30px; }
.color { margin: 16px 0 13px; }
.cap { height: 30px; line-height: 30px; }
.cap + .row { margin: 7px 0 13px; }
.chip { width: 75px; height: 30px; border: 1px solid #ddd; border-radius: 3px; background: #fff; }
.chip i { width: 64px; height: 19px; background: #c9b76e; }
.spin { width: 75px; height: 30px; border: 1px solid #ddd; border-radius: 2px; background: #fff; display: flex; padding: 0 5px 0 8px; }
.spin input { flex: 1; min-width: 0; border: 0; padding: 0; background: none; }
.arrows { display: flex; flex-direction: column; justify-content: center; gap: 6px; }
.up, .down { border: 5px solid transparent; }
.up { border-top: 0; border-bottom: 7px solid #777; }
.down { border-bottom: 0; border-top: 7px solid #777; }
input[type=range] { appearance: none; margin: 0; width: 177px; height: 14px; background: linear-gradient(#d2d2d2, #d2d2d2) center / 100% 4px no-repeat; }
input[type=range].half { background: linear-gradient(90deg, #0a80ff 50%, #d2d2d2 50%) center / 100% 4px no-repeat; }
input[type=range]::-webkit-slider-thumb { appearance: none; width: 14px; height: 14px; border: 2px solid #5a9bea; border-radius: 50%; background: #fff; }

.status { flex: none; height: 38px; border-top: 1px solid #d2d2d2; background: #f4f4f4; display: flex; justify-content: space-between; padding: 0 35px 0 21px; }
.info, .pages { display: flex; align-items: center; }
.page { padding: 0 60px 0 24px; }
.bar { width: 1px; height: 100%; background: #ddd; margin: 0 14px 0 32px; }
.pages .plus { margin-left: 52px; }
.plus { width: 12px; font-size: 17px; }
.info { gap: 11px; }
.info span { padding-right: 10px; }
.info .pct { padding: 0 30px 0 8px; }
#zoom { width: 124px; }
#zoom::-webkit-slider-thumb { border-color: #bbb; }
```
FILE: app.js
```js
const NS = "http://www.w3.org/2000/svg";
const UNIT = 3.308; // screen pixels per millimetre at this zoom

function add(parent, tag, attrs, text) {
  const el = document.createElementNS(NS, tag);
  for (const k in attrs) el.setAttribute(k, attrs[k]);
  if (text !== undefined) el.textContent = text;
  parent.appendChild(el);
}

const h = document.getElementById("rule-h");
for (let v = -20; v <= 345; v += 5) {
  const x = Math.round(80 + v * UNIT);
  const major = v % 20 === 0;
  add(h, "line", { x1: x, x2: x, y1: major ? 0 : 11, y2: 20 });
  if (major) add(h, "text", { x: x + 1, y: 12 }, v);
}

const r = document.getElementById("rule-v");
for (let v = -5; v <= 220; v += 5) {
  const y = Math.round(21 + v * UNIT);
  const major = v % 20 === 0;
  add(r, "line", { x1: major ? 0 : 12, x2: 21, y1: y, y2: y });
  if (major) add(r, "text", { transform: `translate(13 ${y + 2}) rotate(-90)` }, v);
}

const colors = ("b80718 d20a1c c94f78 ed5565 ea6a72 e55f9c e194b5 ed8e87 eb8f9d ffa07a efa993 f4bfbf ead5ea fdd5e5 fce0e6 " +
  "10204f 22386f 472a78 07468e 0466a3 4063ab 5583c7 007fd0 0088ce 2ba3de 00b0ea 2cc9f8 8fc1e9 9fd8ef cdeef6 " +
  "034034 00572c 036558 556b2f 007a40 21973b 00ae9a 52b9c0 1bcbb4 46bd80 00b050 84b90e a3cf60 bdd745 cae7c8 " +
  "e2501f ee6500 f08200 f39b55 f0a800 ffae00 ffbb35 fbc935 ffdc00 fff000 fff37e fbd168 ecca98 fddcae fce8d4 " +
  "773273 834083 674196 75559b 97699b 9d5b8a cb7baa a990cb c2a3c7 ebc0d8 " +
  "5a2a1b 753b2a 91502a a95328 c07a3a b5886c dcb67c d3ccc7 c8d0cb " +
  "000000 3d383a 5a5858 717171 898989 9f9f9f b4b4b4 cccccc dcdcdc eeeeee ffffff").split(" ");
const box = document.getElementById("swatches");
for (const c of colors) {
  const i = document.createElement("i");
  i.style.background = "#" + c;
  box.appendChild(i);
}
```
